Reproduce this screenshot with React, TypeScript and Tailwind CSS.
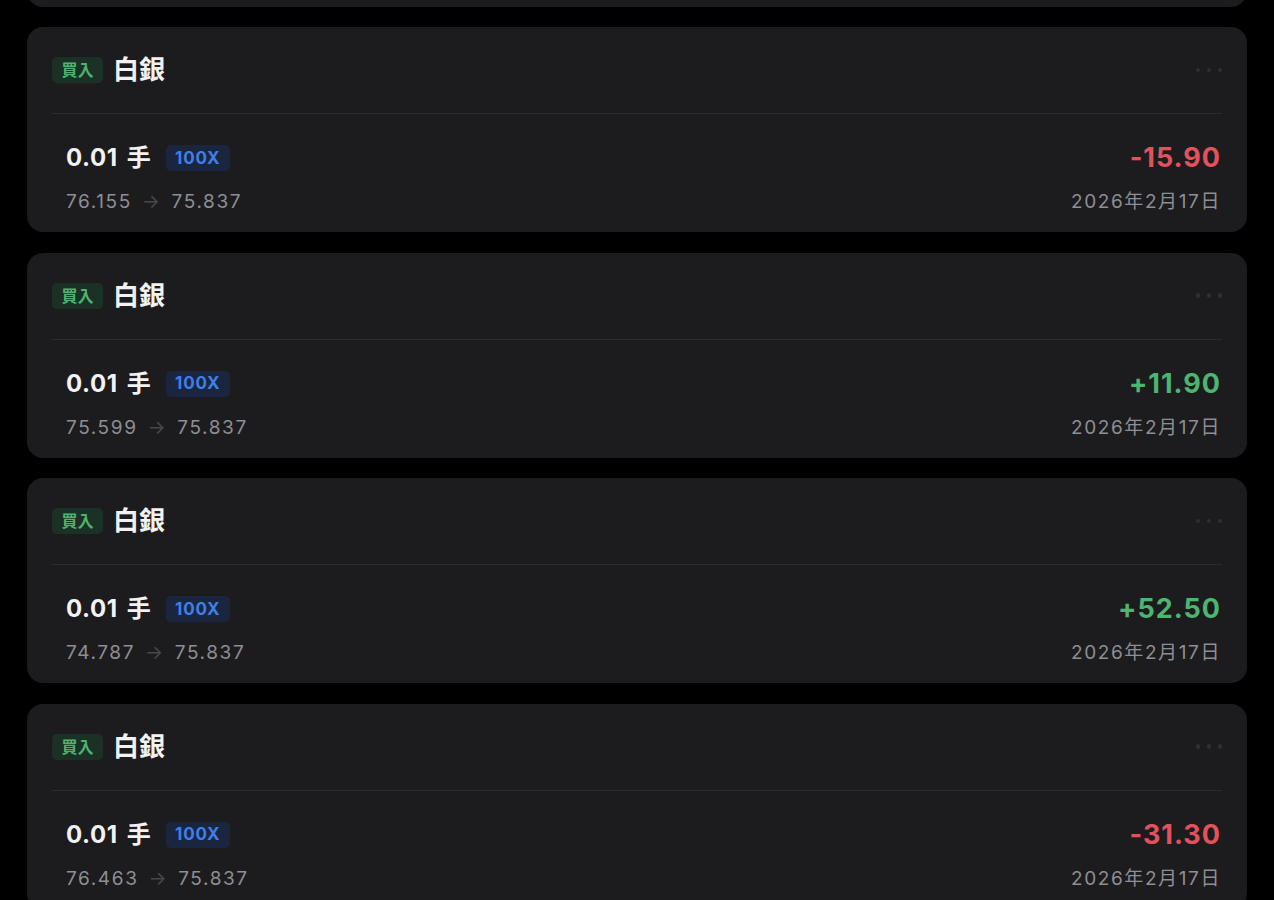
const trades = [
  { qty: "0.01", open: "76.155", close: "75.837", pnl: "-15.90" },
  { qty: "0.01", open: "75.599", close: "75.837", pnl: "+11.90" },
  { qty: "0.01", open: "74.787", close: "75.837", pnl: "+52.50" },
  { qty: "0.01", open: "76.463", close: "75.837", pnl: "-31.30" },
];

type Trade = (typeof trades)[number];

function TradeCard({ trade, className = "" }: { trade: Trade; className?: string }) {
  const isLoss = trade.pnl.startsWith("-");

  return (
    <div className={`h-[205px] rounded-[16px] bg-[#1c1c1e] px-[25px] pt-[28px] ${className}`}>
      <div className="flex h-[30px] items-center">
        <span className="flex h-[26px] w-[51px] items-center justify-center rounded-[5px] bg-[#1c3125] text-[16px] font-semibold leading-none text-[#4fb26e]">
          買入
        </span>
        <span className="ml-[10px] text-[26px] font-bold leading-[30px] text-[#f2f2f2]">
          白銀
        </span>
        <span className="ml-auto flex gap-[6.5px]">
          <span className="size-[4.5px] rounded-full bg-[#2f2f31]" />
          <span className="size-[4.5px] rounded-full bg-[#2f2f31]" />
          <span className="size-[4.5px] rounded-full bg-[#2f2f31]" />
        </span>
      </div>

      <div className="mt-[28px] h-px bg-[#2c2c2e]" />

      <div className="pl-[14px] pr-[1px] pt-[30px]">
        <div className="flex h-[28px] items-center justify-between">
          <div className="flex items-center">
            <span className="text-[24px] font-bold leading-[28px] tracking-[0.6px] text-[#f2f2f2]">
              {trade.qty}
            </span>
            <span className="ml-[9px] text-[24px] font-bold leading-[28px] text-[#f2f2f2]">
              手
            </span>
            <span className="ml-[15px] flex h-[26px] w-[64px] items-center justify-center rounded-[5px] bg-[#1a2640] text-[17px] font-bold leading-none tracking-[0.8px] text-[#3f7fe6]">
              100X
            </span>
          </div>
          <span
            className={`text-[27px] font-bold leading-[28px] tracking-[1px] ${
              isLoss ? "text-[#e2525c]" : "text-[#4cb56f]"
            }`}
          >
            {trade.pnl}
          </span>
        </div>

        <div className="mt-[19px] flex h-[22px] items-center justify-between text-[19px] leading-[22px] tracking-[1.6px] text-[#8e8e93]">
          <span>
            {trade.open}
            <span className="mx-[10px] text-[#48484a]">→</span>
            {trade.close}
          </span>
          <span className="tracking-[1.6px]">2026年2月17日</span>
        </div>
      </div>
    </div>
  );
}

export default function App() {
  return (
    <div
      className="h-[900px] overflow-hidden bg-black px-[27px]"
      style={{ fontFamily: 'Inter, "Noto Sans CJK TC", sans-serif' }}
    >
      <div className="flex flex-col gap-[20.5px]">
        <TradeCard trade={trades[0]} className="-mt-[198.5px]" />
        {trades.map((trade, i) => (
          <TradeCard key={i} trade={trade} />
        ))}
      </div>
    </div>
  );
}
